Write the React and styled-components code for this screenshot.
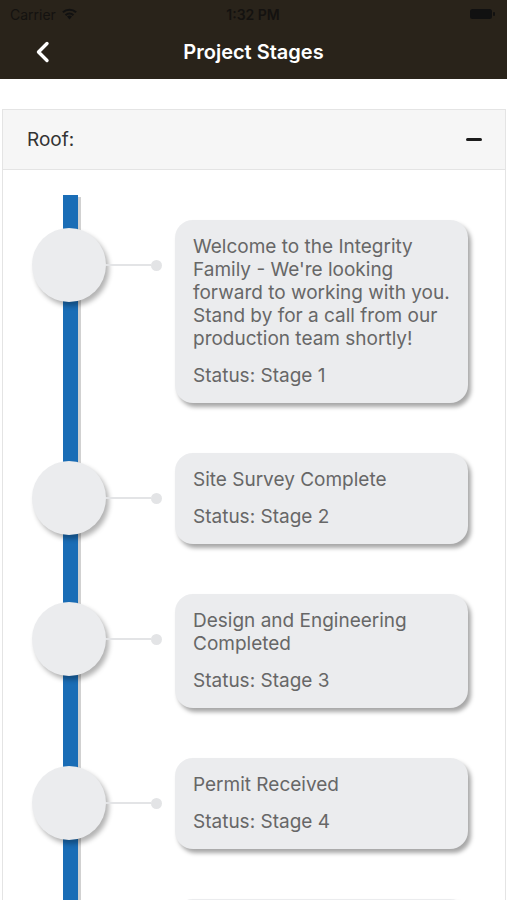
import React from 'react'
import styled, { createGlobalStyle } from 'styled-components'

const stages = [
    { title: "Welcome to the Integrity Family - We're looking forward to working with you. Stand by for a call from our production team shortly!", stage: 1 },
    { title: 'Site Survey Complete', stage: 2 },
    { title: 'Design and Engineering Completed', stage: 3 },
    { title: 'Permit Received', stage: 4 },
    { title: 'Installation Scheduled', stage: 5 },
]

const App = () => {
    return (
        <Screen>
            <GlobalStyle />
            <NavBar>
                <StatusBar>
                    <Carrier>
                        Carrier
                        <svg width="17" height="12" viewBox="0 0 17 12">
                            <path d="M8.5 11.5 L6 8.6 A3.6 3.6 0 0 1 11 8.6 Z" fill="#111" />
                            <path d="M3.9 6.4 A6.6 6.6 0 0 1 13.1 6.4 L11.7 7.9 A4.6 4.6 0 0 0 5.3 7.9 Z" fill="#111" />
                            <path d="M1.2 3.6 A10.5 10.5 0 0 1 15.8 3.6 L14.4 5.1 A8.5 8.5 0 0 0 2.6 5.1 Z" fill="#111" />
                        </svg>
                    </Carrier>
                    <Clock>1:32 PM</Clock>
                    <Battery>
                        <svg width="26" height="12" viewBox="0 0 26 12">
                            <rect x="0" y="1" width="22" height="10" rx="2.5" fill="#111" />
                            <rect x="23" y="4" width="2" height="4" rx="1" fill="#111" />
                        </svg>
                    </Battery>
                </StatusBar>
                <TitleRow>
                    <BackButton>
                        <svg width="16" height="22" viewBox="0 0 16 22">
                            <path d="M12 2.5 L3.5 11 L12 19.5" fill="none" stroke="#fff" strokeWidth="3.4" strokeLinecap="round" strokeLinejoin="round" />
                        </svg>
                    </BackButton>
                    <Title>Project Stages</Title>
                    <span />
                </TitleRow>
            </NavBar>

            <Panel>
                <PanelHeader>
                    <PanelLabel>Roof:</PanelLabel>
                    <Minus />
                </PanelHeader>
                <Timeline>
                    {stages.map((s) => (
                        <Row key={s.stage}>
                            <Node>
                                <Circle />
                                <Connector />
                                <Dot />
                            </Node>
                            <Card>
                                <CardText>{s.title}</CardText>
                                <CardText $status>Status: Stage {s.stage}</CardText>
                            </Card>
                        </Row>
                    ))}
                </Timeline>
            </Panel>
        </Screen>
    )
}

const GlobalStyle = createGlobalStyle`
    body {
        margin: 0;
        background: #fff;
        font-family: Inter, "Liberation Sans", sans-serif;
    }
`
const Screen = styled.div`
    width: 507px;
    display: flex;
    flex-direction: column;
`
const NavBar = styled.div`
    background-color: #29231a;
    height: 79px;
    display: flex;
    flex-direction: column;
    margin-bottom: 30px;
`
const StatusBar = styled.div`
    height: 28px;
    display: grid;
    grid-template-columns: 1fr auto 1fr;
    align-items: center;
    padding: 0 11px 0 10px;
    font-size: 14px;
    color: #141210;
`
const Carrier = styled.div`
    display: flex;
    align-items: center;
    gap: 5px;
`
const Clock = styled.div`
    font-weight: 600;
`
const Battery = styled.div`
    display: flex;
    justify-content: flex-end;
`
const TitleRow = styled.div`
    flex: 1;
    display: grid;
    grid-template-columns: 80px 1fr 80px;
    align-items: center;
    padding-bottom: 3px;
`
const BackButton = styled.div`
    display: flex;
    padding-left: 35px;
`
const Title = styled.h1`
    margin: 0;
    text-align: center;
    color: #fff;
    font-size: 20px;
    font-weight: 600;
`
const Panel = styled.div`
    margin: 0 1px 0 2px;
    border: 1px solid #e4e4e4;
    border-bottom: none;
`
const PanelHeader = styled.div`
    height: 59px;
    background-color: #f6f6f6;
    border-bottom: 1px solid #e4e4e4;
    display: flex;
    align-items: center;
    justify-content: space-between;
    padding: 0 23px 0 24px;
`
const PanelLabel = styled.span`
    font-size: 19px;
    color: #333;
`
const Minus = styled.span`
    width: 16px;
    height: 3px;
    border-radius: 2px;
    background-color: #1c1c1c;
`
const Timeline = styled.div`
    padding-top: 50px;
    background:
        linear-gradient(rgba(0, 0, 0, 0.18), rgba(0, 0, 0, 0.18)) no-repeat 75px 27px / 3px 100%,
        linear-gradient(#1a6db6, #1a6db6) no-repeat 60px 25px / 15px 100%;
`
const Row = styled.div`
    display: grid;
    grid-template-columns: 172px 293px;
    align-items: start;
    padding-bottom: 50px;
`
const Node = styled.div`
    display: flex;
    align-items: center;
    padding-left: 29px;
    margin-top: 8px;
`
const Circle = styled.div`
    width: 74px;
    height: 74px;
    border-radius: 50%;
    background-color: #ebecee;
    box-shadow: 3px 4px 5px rgba(0, 0, 0, 0.3);
    flex-shrink: 0;
`
const Connector = styled.div`
    width: 45px;
    height: 2px;
    background-color: #e3e4e6;
`
const Dot = styled.div`
    width: 11px;
    height: 11px;
    border-radius: 50%;
    background-color: #e3e4e6;
`
const Card = styled.div`
    background-color: #ebecee;
    border-radius: 18px;
    padding: 15px 16px 16px 18px;
    box-shadow: 3px 4px 4px rgba(0, 0, 0, 0.35);
`
const CardText = styled.p`
    margin: ${(props) => (props.$status ? '14px 0 0' : '0')};
    font-size: 19px;
    line-height: 23px;
    color: #676767;
`
export default App
